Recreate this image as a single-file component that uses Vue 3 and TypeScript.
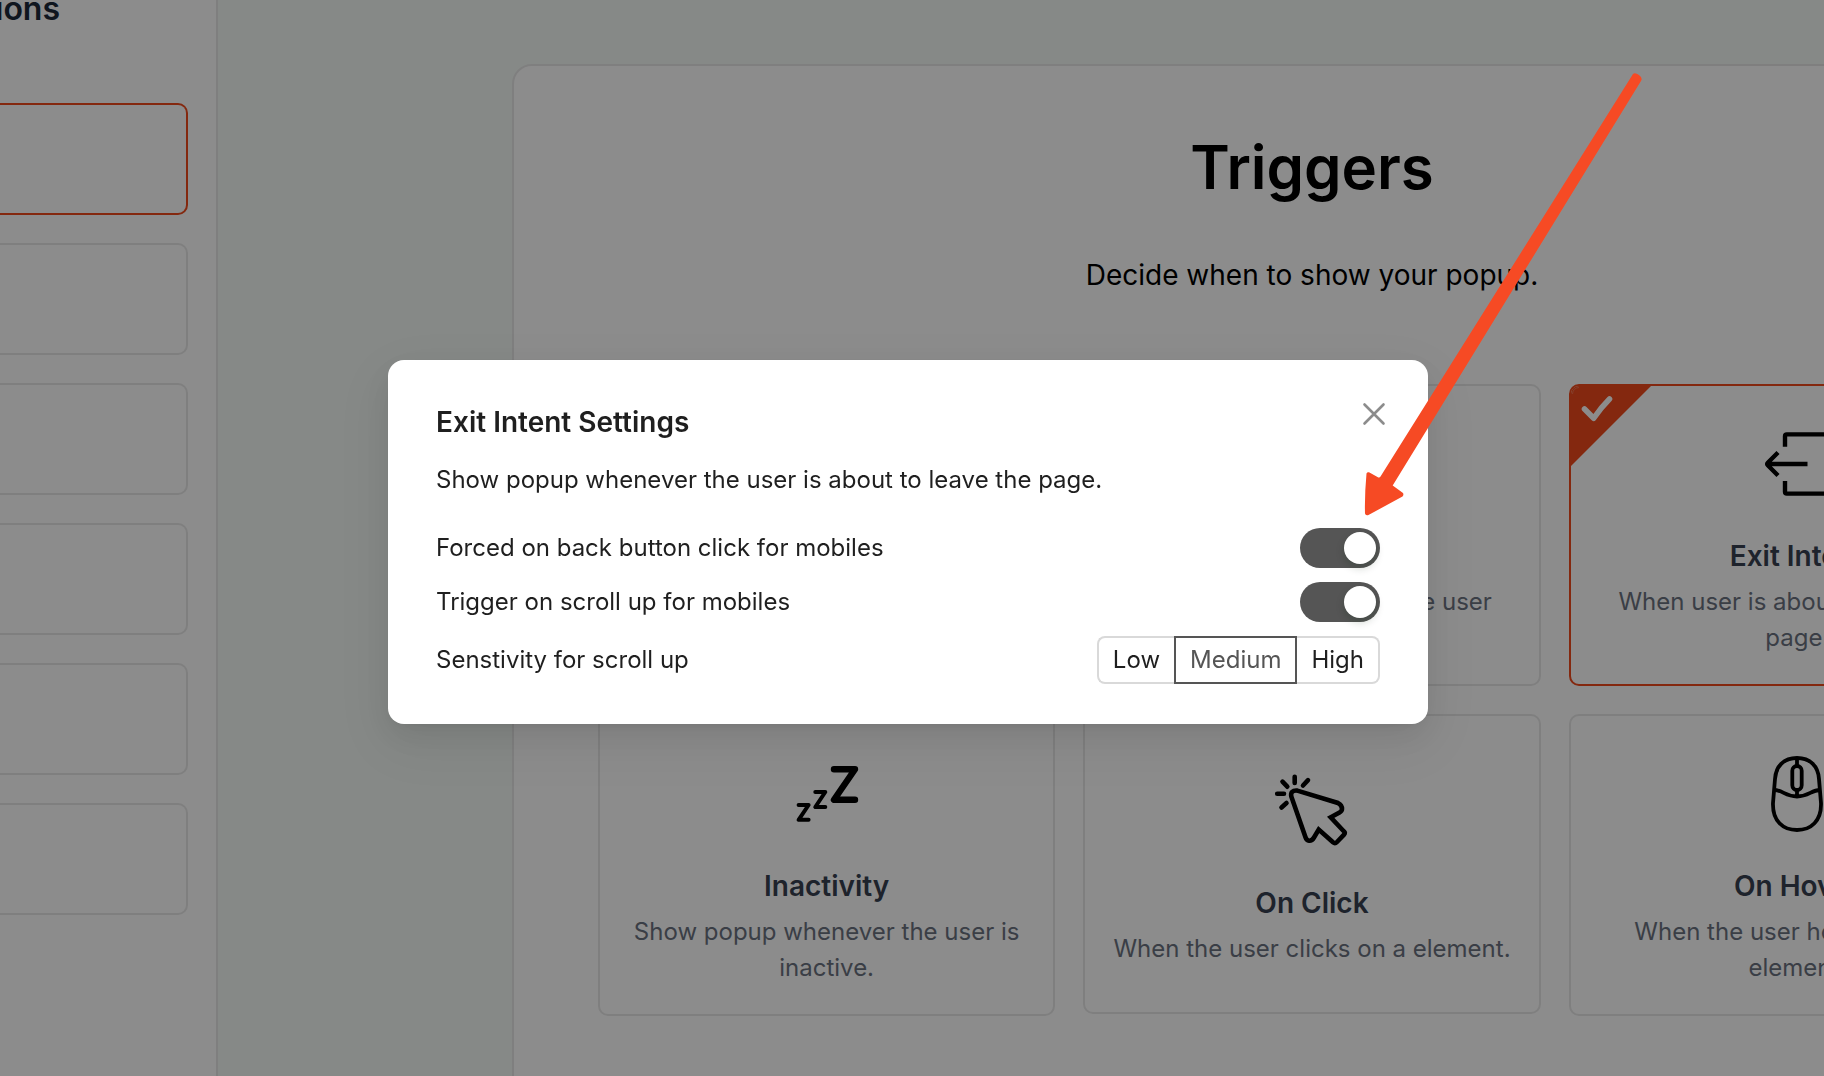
<script setup lang="ts">
import { ref } from 'vue'

interface Trigger {
  id: string
  title: string
  description: string
  selected?: boolean
}

const triggers: Trigger[] = [
  { id: 'load', title: 'Page Load', description: 'Show popup when page has loaded.' },
  { id: 'scroll', title: 'On Scroll', description: 'Show popup each time the user scrolls.' },
  { id: 'exit', title: 'Exit Intent', description: 'When user is about to leave the page.', selected: true },
  { id: 'idle', title: 'Inactivity', description: 'Show popup whenever the user is inactive.' },
  { id: 'click', title: 'On Click', description: 'When the user clicks on a element.' },
  { id: 'hover', title: 'On Hover', description: 'When the user hovers over a element.' },
]

const steps = [1, 2, 3, 4, 5, 6]
const activeStep = ref(1)
const forceOnBack = ref(true)
const onScrollUp = ref(true)
const levels = ['Low', 'Medium', 'High']
const sensitivity = ref('Medium')
</script>

<template>
  <div class="app">
    <aside class="sidebar">
      <h2 class="sidebar-title">ions</h2>
      <nav class="steps">
        <button
          v-for="step in steps"
          :key="step"
          type="button"
          class="step"
          :class="{ active: step === activeStep }"
          :aria-label="`Step ${step}`"
          @click="activeStep = step"
        ></button>
      </nav>
    </aside>

    <main class="main">
      <section class="panel">
        <h1 class="panel-title">Triggers</h1>
        <p class="panel-text">Decide when to show your popup.</p>
        <div class="cards">
          <article v-for="t in triggers" :key="t.id" class="card" :class="{ selected: t.selected }">
            <svg v-if="t.selected" class="badge" viewBox="0 0 80 80" aria-hidden="true">
              <path d="M0 0H80L0 80Z" fill="#f04a1c" />
              <path d="M1.500 8Q2 2 8 1.500" fill="none" stroke="#f4734f" stroke-width="1" />
              <path d="M13.500 23L22.700 32.300Q30 21.500 38.500 13" fill="none" stroke="#fff" stroke-width="5.600" stroke-linecap="round" stroke-linejoin="round" />
            </svg>
            <svg class="icon" viewBox="0 0 100 100" fill="none" stroke="#000" stroke-width="4" aria-hidden="true">
              <g v-if="t.id === 'exit'" stroke-width="4.4">
                <path d="M38 32.700V22.200Q38 20.400 39.800 20.400H80V79.600H39.800Q38 79.600 38 77.800V67" />
                <path d="M60.500 50H20.500M31 38.500L21 48.500Q19.500 50 21 51.500L31 61.500" />
              </g>
              <g v-else-if="t.id === 'idle'" stroke-linecap="round" stroke-linejoin="round">
                <path d="M57 25.200H78L57 55.800H78" stroke-width="6.400" />
                <path d="M38.300 48H48.300L38.300 63H48.300M21.600 61H31.600L21.600 75.800H31.600" />
              </g>
              <g v-else-if="t.id === 'click'" stroke-width="4.600" stroke-linecap="round">
                <path d="M35.300 29.600L76 42Q80 44 80 48Q80 50 77.500 51.500L68.700 56.300L82 70.500Q83.500 72 82 73.700L75 81Q73 83 71 81.300L56.700 68.500L52 76.500Q50 80 47 79.700Q44.500 79.500 43.500 76.300L29.300 35.500Q28 29 35.300 29.600Z" />
                <path d="M32.700 15.700V22M20.500 20.700L25.300 25.700M46 19.200L41 24.500M15.200 32.700H22M19.500 46.500L24.500 42" />
              </g>
              <g v-else-if="t.id === 'hover'" stroke-width="3.800">
                <path d="M50 14C37 14 28.800 22 28 35L26 59C25.400 77 36 86 50 86S74.600 77 74 59L72 35C71.200 22 63 14 50 14Z" />
                <path d="M27 46C36 46 38 52.500 50 52.500S64 46 73 46M50 14V22M50 46V52" />
                <rect x="45.300" y="22" width="9.400" height="24" rx="4.700" />
              </g>
              <path v-else d="M50 20V80M30 60L50 80L70 60" />
            </svg>
            <h3 class="card-title">{{ t.title }}</h3>
            <p class="card-text">{{ t.description }}</p>
          </article>
        </div>
      </section>
    </main>

    <div class="overlay">
      <div class="modal" role="dialog" aria-labelledby="modal-title">
        <button type="button" class="close" aria-label="Close">
          <svg viewBox="0 0 24 24" width="24" height="24" fill="none" stroke="#8c8c8c" stroke-width="2.600" stroke-linecap="round">
            <path d="M2.500 2.500L21.500 21.500M21.500 2.500L2.500 21.500" />
          </svg>
        </button>
        <h2 id="modal-title" class="modal-title">Exit Intent Settings</h2>
        <p class="modal-text">Show popup whenever the user is about to leave the page.</p>
        <div class="settings">
          <div class="setting">
            <label for="force-back">Forced on back button click for mobiles</label>
            <input id="force-back" v-model="forceOnBack" class="switch" type="checkbox" role="switch" />
          </div>
          <div class="setting">
            <label for="scroll-up">Trigger on scroll up for mobiles</label>
            <input id="scroll-up" v-model="onScrollUp" class="switch" type="checkbox" role="switch" />
          </div>
          <div class="setting">
            <span id="sens-label">Senstivity for scroll up</span>
            <div class="levels" role="radiogroup" aria-labelledby="sens-label">
              <label v-for="level in levels" :key="level" class="level" :class="{ on: level === sensitivity }">
                <input v-model="sensitivity" type="radio" name="sensitivity" :value="level" />
                {{ level }}
              </label>
            </div>
          </div>
        </div>
        <svg class="arrow" viewBox="0 0 284 450" width="284" height="450" fill="#f64a24" aria-hidden="true">
          <path d="M271 4Q273 2 277 5Q281 8 279 11L30.700 415.500L41 423Q42 425 40.500 426.500L6.500 445Q3.500 446 3 443.500Q2.500 425 4.500 403.500Q5 402 7 402.300L15.500 407Q17.500 408.300 18.500 406.500Z" />
        </svg>
      </div>
    </div>
  </div>
</template>

<style>
body {
  margin: 0;
}
</style>

<style scoped>
.app {
  display: flex;
  height: 100vh;
  overflow: hidden;
  font-family: Inter, "Liberation Sans", sans-serif;
  color: #000;
}
h1,
h2,
h3,
p {
  margin: 0;
}
.sidebar {
  box-sizing: border-box;
  flex: none;
  width: 218px;
  padding-right: 28px;
  border-right: 2px solid #e8e8e8;
  background: #fff;
  overflow: hidden;
}
.sidebar-title {
  height: 103px;
  margin-left: -5px;
  font-size: 32px;
  line-height: 18px;
  font-weight: 600;
  color: #1d2939;
}
.steps {
  display: flex;
  flex-direction: column;
  gap: 28px;
}
.step {
  height: 112px;
  padding: 0;
  border: 2px solid #e8e8e8;
  border-left: 0;
  border-radius: 0 10px 10px 0;
  background: #fff;
}
.step.active {
  border-color: #f04a1c;
}
.main {
  display: flex;
  flex: 1;
  min-width: 0;
  padding: 64px 0 0 294px;
  background: #f4faf6;
  overflow: hidden;
}
.panel {
  box-sizing: border-box;
  flex: 1;
  min-height: 1100px;
  margin-right: -288px;
  padding: 64px 84px;
  border: 2px solid #e8e8e8;
  border-radius: 20px;
  background: #fff;
  text-align: center;
}
.panel-title {
  font-size: 60px;
  line-height: 74px;
  font-weight: 600;
}
.panel-text {
  margin-top: 50px;
  font-size: 28px;
  line-height: 42px;
}
.cards {
  display: grid;
  grid-template-columns: repeat(3, 1fr);
  align-items: start;
  gap: 28px;
  margin-top: 88px;
}
.card {
  position: relative;
  display: flex;
  flex-direction: column;
  align-items: center;
  justify-content: center;
  box-sizing: border-box;
  min-height: 300px;
  padding: 28px;
  border: 2px solid #e8e8e8;
  border-radius: 10px;
  background: #fff;
  overflow: hidden;
}
.card.selected {
  border-color: #f04a1c;
}
.badge {
  position: absolute;
  top: 0;
  left: 0;
  width: 80px;
}
.icon {
  width: 100px;
  height: 100px;
  margin-bottom: 22px;
}
.card-title {
  font-size: 28px;
  line-height: 40px;
  font-weight: 600;
  color: #374151;
}
.card-text {
  margin-top: 8px;
  font-size: 24px;
  line-height: 36px;
  color: #6b7280;
}
.overlay {
  position: fixed;
  inset: 0;
  display: flex;
  align-items: center;
  justify-content: center;
  padding: 8px 8px 0 0;
  background: rgba(0, 0, 0, 0.45);
}
.modal {
  position: relative;
  box-sizing: border-box;
  width: 1040px;
  padding: 40px 48px;
  border-radius: 16px;
  background: #fff;
  color: #1f1f1f;
  box-shadow:
    0 12px 32px rgba(0, 0, 0, 0.08),
    0 6px 12px -8px rgba(0, 0, 0, 0.12),
    0 18px 56px 16px rgba(0, 0, 0, 0.05);
}
.close {
  position: absolute;
  top: 32px;
  right: 32px;
  display: grid;
  place-items: center;
  width: 44px;
  height: 44px;
  padding: 0;
  border: 0;
  background: none;
}
.modal-title {
  font-size: 28px;
  line-height: 44px;
  font-weight: 600;
}
.modal-text {
  margin: 16px 0 28px;
  font-size: 24px;
  line-height: 40px;
}
.settings {
  display: flex;
  flex-direction: column;
  gap: 14px;
  font-size: 24px;
  line-height: 38px;
}
.setting {
  display: flex;
  align-items: center;
  justify-content: space-between;
}
.switch {
  appearance: none;
  display: flex;
  box-sizing: border-box;
  width: 80px;
  height: 40px;
  margin: 0;
  padding: 4px;
  border-radius: 20px;
  background: #bfbfbf;
}
.switch::before {
  content: '';
  width: 32px;
  height: 32px;
  border-radius: 50%;
  background: #fff;
  box-shadow: 0 4px 8px rgba(0, 35, 11, 0.2);
}
.switch:checked {
  justify-content: flex-end;
  background: #555;
}
.levels {
  display: flex;
}
.level {
  position: relative;
  box-sizing: border-box;
  height: 48px;
  padding: 0 14px;
  border: 2px solid #d9d9d9;
  border-width: 2px 0;
  line-height: 44px;
}
.level:first-child {
  border-left-width: 2px;
  border-radius: 8px 0 0 8px;
}
.level:last-child {
  border-right-width: 2px;
  border-radius: 0 8px 8px 0;
}
.level.on {
  border-width: 2px;
  border-color: #555;
  color: #555;
}
.level input {
  position: absolute;
  inset: 0;
  margin: 0;
  opacity: 0;
}
.arrow {
  position: absolute;
  top: -290px;
  right: -218px;
  pointer-events: none;
}
</style>
